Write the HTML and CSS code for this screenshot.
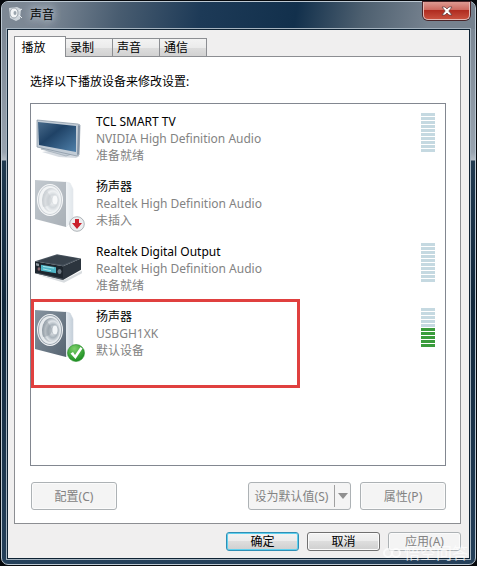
FILE: index.html
```
<!DOCTYPE html>
<html lang="zh-CN">
<head>
    <meta charset="UTF-8">
    <meta name="viewport" content="width=device-width, initial-scale=1.0">
    <title>声音</title>
    <link rel="stylesheet" href="styles.css">
</head>
<body>
    <svg class="defs" width="0" height="0" aria-hidden="true">
        <defs>
            <linearGradient id="screen" x1="0" y1="0" x2="1" y2="1">
                <stop offset="0" stop-color="#4a6c8c"/>
                <stop offset=".4" stop-color="#1f4266"/>
                <stop offset="1" stop-color="#4f80aa"/>
            </linearGradient>
            <linearGradient id="side" x1="0" y1="0" x2="1" y2="0">
                <stop offset="0" stop-color="#e9eef3"/>
                <stop offset="1" stop-color="#c3ced8"/>
            </linearGradient>
            <linearGradient id="panel" x1="0" y1="0" x2="1" y2="1">
                <stop offset="0" stop-color="#8794a0"/>
                <stop offset="1" stop-color="#566471"/>
            </linearGradient>
            <radialGradient id="cone" cx=".6" cy=".55" r=".6">
                <stop offset="0" stop-color="#f4f6f8"/>
                <stop offset=".45" stop-color="#a9b3bb"/>
                <stop offset=".7" stop-color="#dfe4e8"/>
                <stop offset="1" stop-color="#8d98a2"/>
            </radialGradient>
            <radialGradient id="green" cx=".4" cy=".25" r=".8">
                <stop offset="0" stop-color="#7ccf6a"/>
                <stop offset="1" stop-color="#148a1c"/>
            </radialGradient>
            <symbol id="speaker" viewBox="0 0 48 52">
                <path d="M30 2l5 1 3 6v28l-3 6-4 4z" fill="url(#side)" stroke="#ccd5dd" stroke-width=".6"/>
                <path d="M0 0l31 2v45L0 39z" fill="url(#panel)"/>
                <ellipse cx="15" cy="20" rx="13" ry="16" fill="#f2f4f6"/>
                <ellipse cx="15" cy="20" rx="12" ry="15" fill="#9aa5af"/>
                <ellipse cx="15" cy="20" rx="11" ry="14" fill="#e6eaed"/>
                <ellipse cx="16" cy="20" rx="9" ry="12" fill="url(#cone)"/>
                <path d="M8 27q7 0 10-7l-6-9q-7 7-4 16z" fill="#8d979f" opacity=".5"/>
                <ellipse cx="20" cy="20" rx="3" ry="5" fill="#f2f5f7" stroke="#aab4bc" stroke-width=".7"/>
            </symbol>
        </defs>
    </svg>

    <div class="window">
        <header class="titlebar">
            <svg class="title-icon" viewBox="0 0 16 16" aria-hidden="true">
                <path d="M1 2l8-1 4 2-1 10-4 2-6-3z" fill="#cfd6dc"/>
                <ellipse cx="6" cy="7" rx="4" ry="5" fill="#f2f4f6" stroke="#8a949d" stroke-width=".8"/>
                <ellipse cx="7" cy="7" rx="1.500" ry="2" fill="#9aa4ad"/>
                <path d="M11 5l3-2M11 9l3 3" stroke="#e8ecf0"/>
            </svg>
            <h1 class="title">声音</h1>
            <button class="close" type="button" aria-label="关闭">
                <svg viewBox="0 0 12 10" width="12" height="10">
                    <path d="M1 1h3l2 2 2-2h3L7.800 5 11 9H8L6 7 4 9H1l3.200-4z" fill="#fff" stroke="#5a3a3e" stroke-width=".7"/>
                </svg>
            </button>
        </header>

        <main class="client">
            <div class="tabs" role="tablist">
                <button class="tab active" type="button" role="tab" aria-selected="true">播放</button>
                <button class="tab" type="button" role="tab" aria-selected="false">录制</button>
                <button class="tab" type="button" role="tab" aria-selected="false">声音</button>
                <button class="tab" type="button" role="tab" aria-selected="false">通信</button>
            </div>

            <section class="page" role="tabpanel">
                <p class="hint">选择以下播放设备来修改设置:</p>

                <ul class="devices">
                    <li class="device">
                        <svg class="icon" viewBox="0 0 48 52" aria-hidden="true">
                            <g transform="translate(1 -4)">
                                <path d="M6 41l13-2 19 5 6 1-4 2-17-1z" fill="#c5ccd4" opacity=".7"/>
                                <path d="M5 38l8-3 20 5 3 3-6 2-14-4z" fill="#c3ccd5" stroke="#8996a3" stroke-width=".5"/>
                                <path d="M1 9l41 4 2 1-1 30-2 1L1 36z" fill="#c2ccd6" stroke="#8492a0" stroke-width=".7"/>
                                <path d="M2 11l38 4v26L3 34z" fill="url(#screen)"/>
                                <path d="M42 14l2 1-1 28-2 1z" fill="#8695a6"/>
                            </g>
                        </svg>
                        <div class="info">
                            <h2 class="name">TCL SMART TV</h2>
                            <p>NVIDIA High Definition Audio</p>
                            <p>准备就绪</p>
                        </div>
                        <div class="meter" aria-hidden="true"><i></i><i></i><i></i><i></i><i></i><i></i><i></i><i></i><i></i><i></i></div>
                    </li>
                    <li class="device">
                        <div class="icon">
                            <svg class="faded" viewBox="0 0 48 52" aria-hidden="true"><use href="#speaker"/></svg>
                            <svg class="badge unplugged" viewBox="0 0 16 16" aria-hidden="true">
                                <circle cx="8" cy="8" r="7.300" fill="#eceef0" stroke="#9da3a8" stroke-width=".8"/>
                                <path d="M6 3h4v4h3l-5 6-5-6h3z" fill="#c9202c"/>
                            </svg>
                        </div>
                        <div class="info">
                            <h2 class="name">扬声器</h2>
                            <p>Realtek High Definition Audio</p>
                            <p>未插入</p>
                        </div>
                    </li>
                    <li class="device">
                        <svg class="icon" viewBox="0 0 48 52" aria-hidden="true">
                            <g transform="translate(0 -1) scale(1 .86)">
                                <path d="M3 36l26 6 18-11v3L29 45z" fill="#c8cdd2" opacity=".7"/>
                                <path d="M0 20l22-8 24 5-18 9z" fill="#4b5661"/>
                                <path d="M3 20l19-7 21 4-15 7z" fill="#38424c"/>
                                <path d="M0 20l28 6v16L0 34z" fill="#1e262e"/>
                                <path d="M28 26l18-9v13L28 42z" fill="#2c353e"/>
                                <path d="M6 24l15 3v7L6 31z" fill="#4fb6c6"/>
                                <path d="M8 26l11 2M8 29l8 2" stroke="#c4f2f5" stroke-width=".8"/>
                                <path d="M1 22l3 1v3l-3-1z" fill="#8d979f"/>
                                <ellipse cx="4" cy="29" rx="1.500" ry="2" fill="#87636a"/>
                                <ellipse cx="24.500" cy="32" rx="2" ry="3" fill="#6e7982"/>
                                <path d="M2 34l26 7" stroke="#6c7680" stroke-width=".7"/>
                            </g>
                        </svg>
                        <div class="info">
                            <h2 class="name">Realtek Digital Output</h2>
                            <p>Realtek High Definition Audio</p>
                            <p>准备就绪</p>
                        </div>
                        <div class="meter" aria-hidden="true"><i></i><i></i><i></i><i></i><i></i><i></i><i></i><i></i><i></i><i></i></div>
                    </li>
                    <li class="device marked">
                        <div class="icon">
                            <svg viewBox="0 0 48 52" aria-hidden="true"><use href="#speaker"/></svg>
                            <svg class="badge" viewBox="0 0 18 18" aria-hidden="true">
                                <circle cx="9" cy="9" r="8.500" fill="url(#green)" stroke="#2c8d2c" stroke-width=".6"/>
                                <path d="M3.500 9.500l2.500-1.500 2 3 5.500-8 2 1.500L8.500 15z" fill="#fff"/>
                            </svg>
                        </div>
                        <div class="info">
                            <h2 class="name">扬声器</h2>
                            <p>USBGH1XK</p>
                            <p>默认设备</p>
                        </div>
                        <div class="meter" aria-hidden="true"><i></i><i></i><i></i><i></i><i></i><i class="on"></i><i class="on"></i><i class="on"></i><i class="on"></i><i class="on"></i></div>
                    </li>
                </ul>

                <div class="actions">
                    <button class="btn" type="button" disabled>配置(C)</button>
                    <div class="split">
                        <button class="split-main" type="button" disabled>设为默认值(S)</button>
                        <button class="split-arrow" type="button" aria-label="更多选项" disabled></button>
                    </div>
                    <button class="btn" type="button" disabled>属性(P)</button>
                </div>
            </section>

            <footer class="footer">
                <button class="btn small default" type="button">确定</button>
                <button class="btn small" type="button">取消</button>
                <button class="btn small" type="button" disabled>应用(A)</button>
                <div class="watermark">
                    <svg viewBox="0 0 20 12" width="20" height="12" aria-hidden="true">
                        <circle cx="6" cy="6" r="4" fill="none" stroke="#fff" stroke-width="2"/>
                        <circle cx="14" cy="6" r="4" fill="none" stroke="#fff" stroke-width="2"/>
                    </svg>
                    <span>悟空问答</span>
                </div>
            </footer>
        </main>
    </div>
</body>
</html>
```
FILE: styles.css
```
*, *::after {
    box-sizing: border-box;
}
body {
    display: flex;
    min-height: 100vh;
    margin: 0;
    padding: 1px;
    background: #05080c;
    font-family: "Noto Sans", "Noto Sans CJK SC", sans-serif;
    font-size: 12px;
    line-height: 17px;
    color: #000;
}
h1, h2, p, ul {
    margin: 0;
    padding: 0;
    font-size: inherit;
    font-weight: normal;
}
button {
    font: inherit;
    color: inherit;
    padding: 0;
}
.defs {
    position: absolute;
}
.window {
    flex: 1;
    display: flex;
    flex-direction: column;
    padding: 0 5px 5px;
    border: 1px solid #bcc8d2;
    border-radius: 7px;
    background: linear-gradient(#76828f 0, #98a3af 150px, #b4bcc5 158px, #213a50 159px, #12283c 300px, #25405a 100%);
}
.titlebar {
    display: flex;
    align-items: flex-start;
    height: 27px;
    margin: 0 -5px;
    padding: 0 5px 0 6px;
    border-radius: 6px 6px 0 0;
    background: linear-gradient(100deg, #7d8894 0, #7b8794 10%, #485c70 25%, #1d3a57 42%, #12304c 62%, #4e6070 76%, #76828f 90%);
}
.title-icon {
    width: 16px;
    height: 16px;
    margin-top: 4px;
}
.title {
    flex: 1;
    margin: 4px 0 0 6px;
    text-shadow: 0 0 8px #c8d2dc, 0 0 8px #c8d2dc;
}
.close {
    display: flex;
    align-items: center;
    justify-content: center;
    width: 47px;
    height: 18px;
    border: 1px solid #e6b9b4;
    border-top: 0;
    border-radius: 0 0 5px 5px;
    background: linear-gradient(#dd9a92 0, #cd6a60 45%, #b02c20 50%, #c8503e 100%);
    box-shadow: 0 0 0 1px #4a2428;
}
.client {
    flex: 1;
    display: flex;
    flex-direction: column;
    padding: 6px 8px 7px 6px;
    border: 1px solid #0e2233;
    background: #f0efef;
    box-shadow: 0 0 0 1px #a5b3bf;
}
.tabs {
    display: flex;
    align-items: flex-end;
    height: 20px;
}
.tab {
    width: 47px;
    height: 18px;
    padding-right: 14px;
    border: 1px solid #8c8e92;
    border-left-width: 0;
    border-bottom: 0;
    background: linear-gradient(#f3f3f3 0, #ebebeb 50%, #dcdcdc 55%, #d2d2d2 100%);
}
.tab.active {
    position: relative;
    width: 52px;
    height: 21px;
    margin-bottom: -1px;
    padding-right: 13px;
    border-left-width: 1px;
    background: #fff;
}
.page {
    flex: 1;
    display: flex;
    flex-direction: column;
    padding: 16px 14px 13px 15px;
    border: 1px solid #8c8e92;
    background: #fff;
}
.hint {
    margin-bottom: 13px;
}
.devices {
    flex: 1;
    list-style: none;
    border: 1px solid #828790;
    padding-top: 5px;
}
.device {
    position: relative;
    display: flex;
    height: 65px;
    padding: 4px 10px 0 4px;
}
/* red frame drawn over the default device */
.device.marked::after {
    content: "";
    position: absolute;
    top: -5px;
    left: 0;
    width: 269px;
    height: 89px;
    border: 3px solid #e0403f;
}
.icon {
    flex: none;
    position: relative;
    width: 48px;
    height: 52px;
    margin: 2px 13px 0 0;
}
.faded {
    opacity: .5;
}
.badge {
    position: absolute;
    right: -2px;
    bottom: 0;
    width: 18px;
    height: 18px;
}
.badge.unplugged {
    width: 16px;
    height: 16px;
}
.info {
    flex: 1;
    color: #838383;
}
.name {
    color: #000;
}
.meter {
    display: grid;
    grid-auto-rows: 3px;
    gap: 1px;
    align-content: start;
    width: 14px;
}
.meter i {
    background: #c5d9e1;
}
.meter .on {
    background: #3a9c3c;
}
.actions {
    display: flex;
    gap: 9px;
    margin-top: 16px;
    padding-left: 1px;
}
.btn {
    width: 86px;
    height: 28px;
    border: 1px solid #707070;
    border-radius: 3px;
    background: linear-gradient(#f3f3f3 0, #ebebeb 50%, #dddddd 50%, #cfcfcf 100%);
    box-shadow: inset 0 0 0 1px #fbfbfb;
}
.btn:disabled,
.split {
    border-color: #adb2b5;
    background: #f4f4f4;
    color: #838383;
}
.split {
    display: flex;
    align-items: center;
    width: 103px;
    height: 28px;
    margin-left: auto;
    border: 1px solid #adb2b5;
    border-radius: 3px;
}
.split button {
    border: 0;
    background: none;
    color: inherit;
}
.split-main {
    flex: 1;
}
.split .split-arrow {
    display: flex;
    align-items: center;
    justify-content: center;
    width: 16px;
    height: 22px;
    border-left: 1px solid #a0a0a0;
}
.split-arrow::before {
    content: "";
    border: 5px solid transparent;
    border-top: 6px solid #8f8f8f;
    border-bottom: 0;
}
.footer {
    position: relative;
    display: flex;
    justify-content: flex-end;
    gap: 8px;
    padding-top: 8px;
}
.btn.small {
    width: 73px;
    height: 19px;
    line-height: 17px;
}
.btn.default {
    border-color: #2f8fb5;
    box-shadow: inset 0 0 0 1px #5fd0ee;
}
.watermark {
    position: absolute;
    right: -7px;
    bottom: -10px;
    display: flex;
    align-items: center;
    gap: 2px;
    color: #fff;
    font-size: 16px;
    line-height: 16px;
    opacity: .7;
}
```
